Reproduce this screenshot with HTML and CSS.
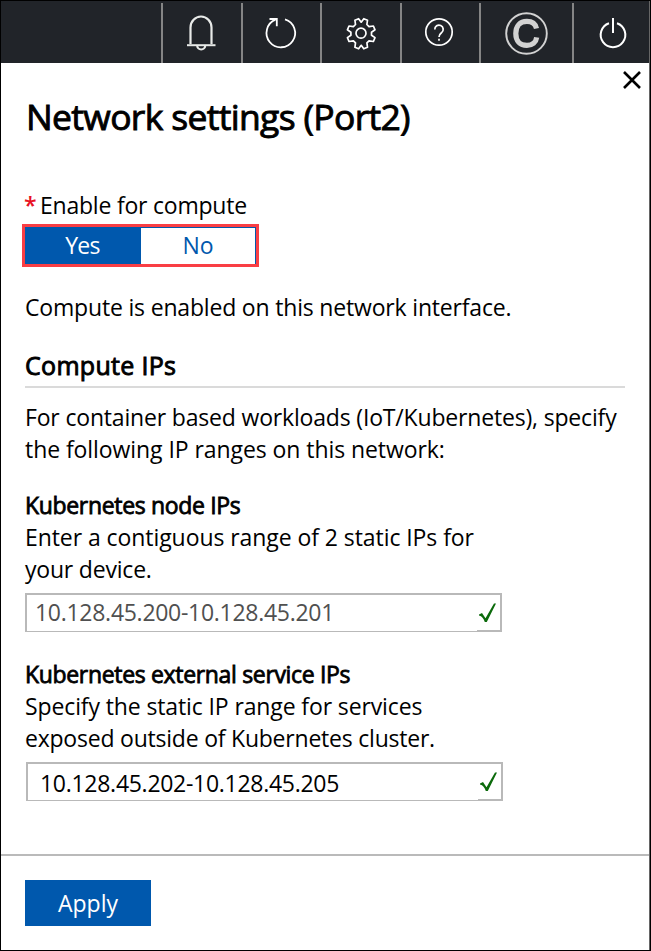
FILE: index.html
```html
<!DOCTYPE html>
<html lang="en">
<head>
<meta charset="utf-8">
<title>Network settings (Port2)</title>
<link rel="stylesheet" href="styles.css">
</head>
<body>
<div class="window">
  <header class="toolbar">
    <div class="tool tool-first"></div>
    <div class="tool tool-bell"><svg width="78" height="60" viewBox="163 3 78 60"><path d="M190.500 44V27.500a10.500 11 0 0 1 21 0V44" stroke="#e8eae8" stroke-width="2.200"/><path d="M187 45.200h28.500" stroke="#e8eae8" stroke-width="2"/><path d="M197.200 45.500a4 4 0 0 0 8 0" stroke="#e8eae8" stroke-width="2.200"/></svg></div>
    <div class="tool tool-refresh"><svg width="77" height="60" viewBox="243 3 77 60"><path d="M285 19.300a14.300 14.300 0 1 1-9.500.4" stroke="#fff" stroke-width="1.800"/><path d="M269.500 19h7.300v7.300" stroke="#fff" stroke-width="1.800"/></svg></div>
    <div class="tool tool-gear"><svg width="78" height="60" viewBox="322 3 78 60"><path stroke="#fff" stroke-width="1.700" stroke-linejoin="round" d="M358.600 18.700l-3.700 1.500.6 4.300-2.100 2.100-4.400-.6-1.600 3.800 3.500 2.500v2.900l-3.500 2.400 1.600 3.900 4.400-.7 2.100 2.100-.6 4.400 3.700 1.500 2.600-3.500 2.600 3.500 3.700-1.500-.6-4.400 2.100-2.100 4.400.7 1.600-3.900-3.500-2.400v-2.900l3.500-2.500-1.600-3.800-4.400.6-2.100-2.100.6-4.300-3.700-1.500-2.600 3.500z"/><circle cx="361" cy="33.200" r="5" stroke="#fff" stroke-width="1.700"/></svg></div>
    <div class="tool tool-help"><svg width="77" height="60" viewBox="402 3 77 60"><circle cx="439" cy="32" r="13.200" stroke="#fff" stroke-width="1.700"/><path d="M434.800 29.500a4.200 4.200 0 1 1 6.800 3.100c-1.500 1.200-2.600 2-2.600 4.400M439 38.800v2" stroke="#fff" stroke-width="1.700"/></svg></div>
    <div class="tool tool-account"><svg width="91" height="60" viewBox="481 3 91 60"><circle cx="526.500" cy="33.500" r="20.300" stroke="#d2d2d2" stroke-width="1.900"/><path d="M536.500 28.500c-1-4.400-4.400-7.100-9.600-7.100-7 0-11.100 4.700-11.100 12s4.100 12 11.100 12c5.400 0 9.100-3 9.800-8" stroke="#d2d2d2" stroke-width="5.200"/></svg></div>
    <div class="tool tool-power"><svg width="75" height="60" viewBox="574 3 75 60"><path d="M609 23.200a12.300 12.300 0 1 0 8 0M613 18v15" stroke="#fff" stroke-width="2"/></svg></div>
  </header>
  <main class="panel">
    <button class="close" aria-label="Close"><svg width="20" height="20" viewBox="0 0 20 20"><path d="M2 2l16 16M18 2L2 18" stroke="#000" stroke-width="2.600"/></svg></button>
    <h1 class="title">Network settings (Port2)</h1>
    <div class="label"><span class="star">*</span><span class="label-text">Enable for compute</span></div>
    <div class="toggle"><div class="option selected">Yes</div><div class="option">No</div></div>
    <p class="status">Compute is enabled on this network interface.</p>
    <h2 class="section">Compute IPs</h2>
    <p class="intro"><span class="intro-a">For container based workloads (IoT/Kubernetes), specify</span><br><span class="intro-b">the following IP ranges on this network:</span></p>
    <section class="field node">
      <h3>Kubernetes node IPs</h3>
      <p><span class="node-a">Enter a contiguous range of 2 static IPs for</span><br><span class="node-b">your device.</span></p>
      <div class="input"><span class="value">10.128.45.200-10.128.45.201</span><svg class="check" width="23" height="33" viewBox="0 0 23 33"><path d="M2 18.500l3-1.500 3.500 5.200L17 7.500H19L9.800 26H7.800C6.500 22.500 5 20 2 19.500z" fill="#0b6a0b"/></svg></div>
    </section>
    <section class="field external">
      <h3>Kubernetes external service IPs</h3>
      <p><span class="ext-a">Specify the static IP range for services</span><br><span class="ext-b">exposed outside of Kubernetes cluster.</span></p>
      <div class="input"><span class="value">10.128.45.202-10.128.45.205</span><svg class="check" width="23" height="33" viewBox="0 0 23 33"><path d="M2 18.500l3-1.500 3.500 5.200L17 7.500H19L9.800 26H7.800C6.500 22.500 5 20 2 19.500z" fill="#0b6a0b"/></svg></div>
    </section>
  </main>
  <footer class="footer"><button class="apply">Apply</button></footer>
</div>
</body>
</html>
```
FILE: styles.css
```css
* { box-sizing: border-box; }
body { margin: 0; background: #fff; color: #000; font: 23px/32px "Open Sans", "Noto Sans", sans-serif; }
h1, h2, h3, p { margin: 0; }
button { border: 0; padding: 0; font: inherit; }
svg { display: block; fill: none; }
.window { width: 651px; height: 951px; border: 1px solid #000; display: flex; flex-direction: column; position: relative; box-shadow: inset -1px 0 #666; }
.toolbar { display: flex; height: 62px; padding-top: 2px; background: #212429; margin-right: 1px; }
.tool { border-left: 2px solid #858585; height: 60px; flex: none; }
.tool-first { width: 160px; border-left: 0; }
.tool-bell { width: 80px; }
.tool-refresh { width: 79px; }
.tool-gear { width: 80px; }
.tool-help { width: 79px; }
.tool-account { width: 93px; }
.tool-power { width: 77px; }
.panel { flex: 1; padding: 0 24px; }
.close { position: absolute; left: 621px; top: 69px; width: 20px; height: 20px; background: none; }
.title { font-size: 35.5px; line-height: 48px; font-weight: 400; letter-spacing: -0.67px; -webkit-text-stroke: 0.9px #000; padding: 29px 0 0 1px; white-space: nowrap; }
.label { display: flex; margin-top: 49px; height: 32px; }
.star { color: #e81123; font-weight: 600; width: 15px; margin-left: -1px; margin-right: 1px; }
.label-text { letter-spacing: -0.22px; }
.toggle { display: flex; width: 237px; height: 43px; margin: 3px 0 0 -3px; border: 3px solid #f93e44; }
.option { width: 115px; text-align: center; color: #0058ad; border: solid #0058ad; border-width: 1px 1px 0 0; line-height: 35px; }
.selected { width: 116px; background: #0058ad; color: #fff; letter-spacing: -0.7px; }
.status { margin-top: 24px; white-space: nowrap; letter-spacing: -0.18px; }
.section { font-size: 25px; line-height: 31px; font-weight: 400; letter-spacing: 0.3px; -webkit-text-stroke: 0.9px #000; margin-top: 27px; height: 38px; width: 600px; border-bottom: 2px solid #dadada; }
.intro { margin-top: 13px; white-space: nowrap; }
.intro-a { letter-spacing: -0.175px; }
.intro-b, .node-a { letter-spacing: -0.07px; }
.node-b { letter-spacing: -0.2px; }
.ext-a { letter-spacing: -0.12px; }
.ext-b { letter-spacing: -0.22px; }
.field { margin-top: 24px; white-space: nowrap; }
.external { margin-top: 26px; }
.field h3 { font-size: 23px; line-height: 32px; font-weight: 400; letter-spacing: -0.33px; -webkit-text-stroke: 0.8px #000; }
.input { display: flex; justify-content: space-between; width: 477px; height: 39px; margin-top: 8px; border: 2px solid #b9b9b9; border-bottom-width: 1px; }
.value { letter-spacing: -0.28px; }
.node .value { padding-left: 8px; color: #505050; line-height: 35px; }
.external .value { padding-left: 12px; line-height: 38px; }
.external .input { margin-left: 1px; }
.check { height: 36px; border-bottom: 1px solid #b9b9b9; }
.footer { height: 96px; border-top: 2px solid #bababa; padding: 24px; margin-right: 1px; }
.apply { width: 126px; height: 46px; background: #0058ad; color: #fff; }
```
